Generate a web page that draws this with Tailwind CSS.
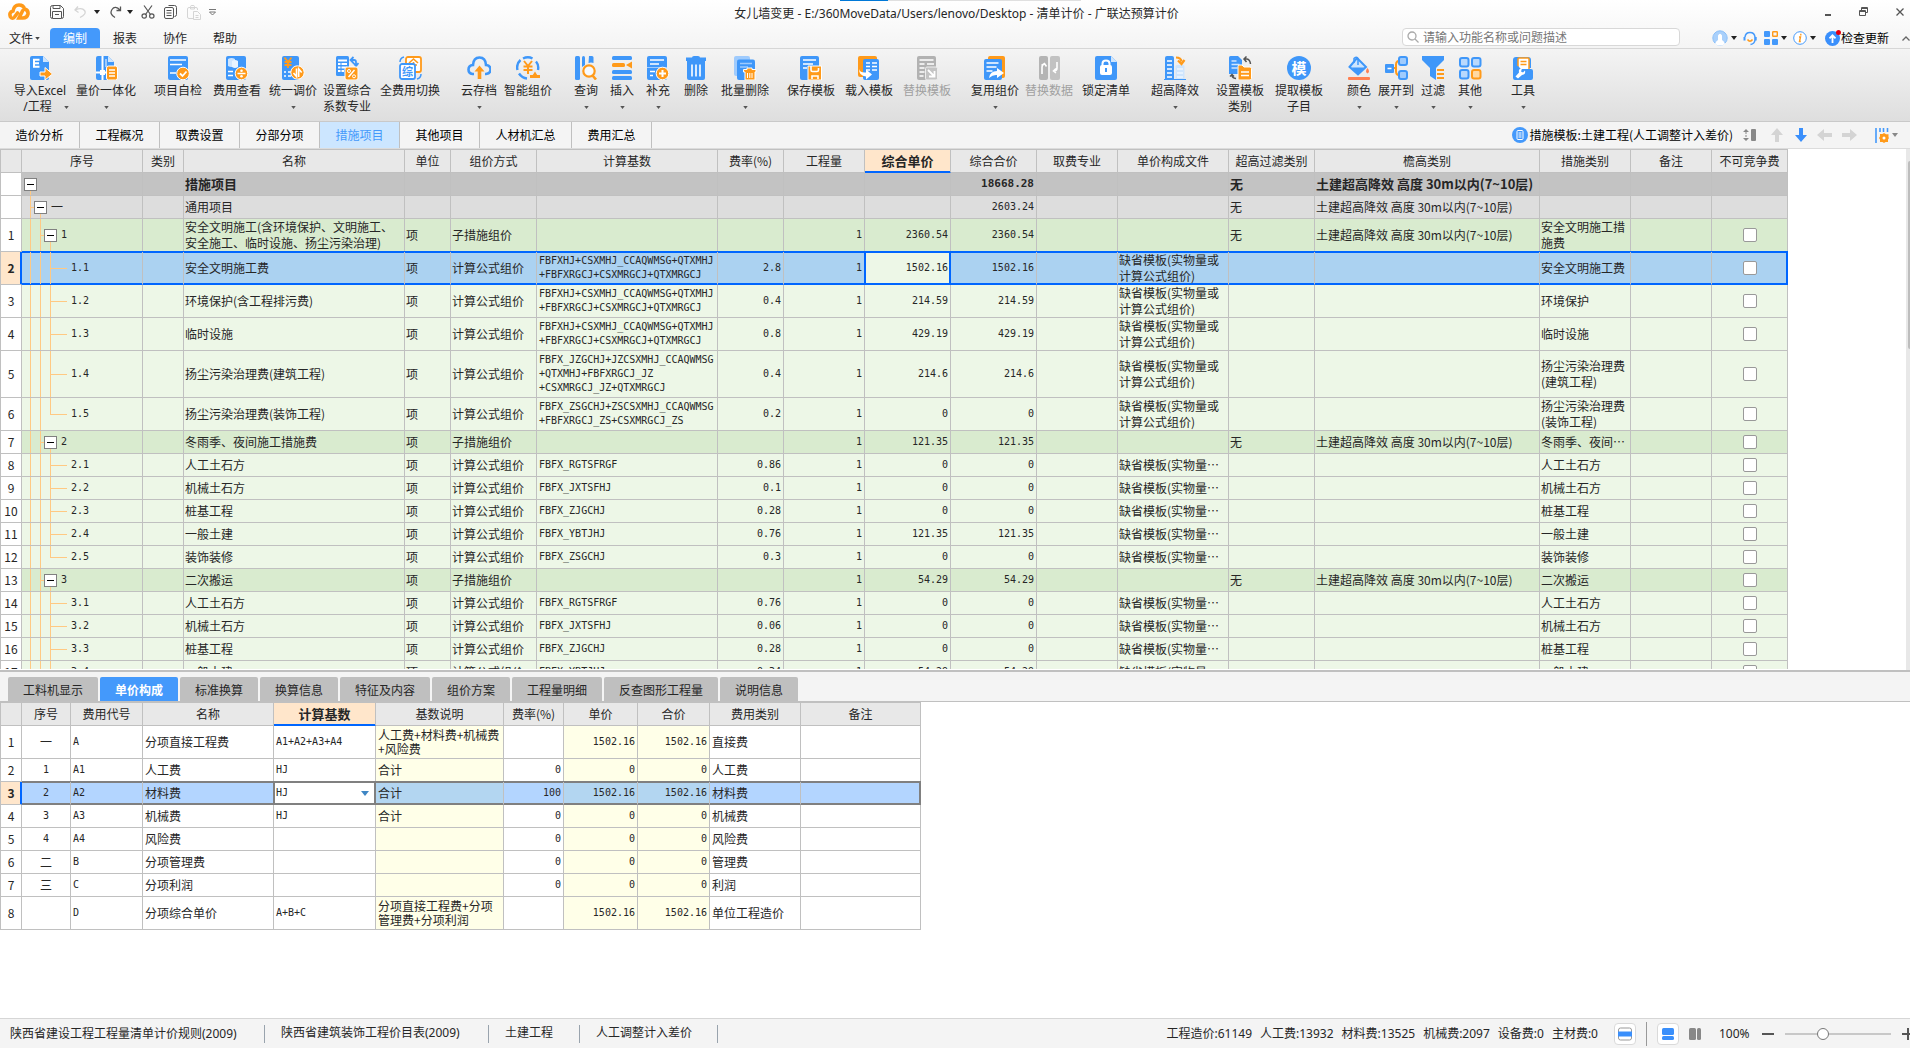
<!DOCTYPE html>
<html lang="zh-CN">
<head>
  <meta charset="UTF-8">
  <meta name="viewport" content="width=device-width, initial-scale=1.0">
  <title>女儿墙变更 - 清单计价 - 广联达预算计价</title>
  <script src="https://cdn.jsdelivr.net/npm/@tailwindcss/browser@4"></script>
</head>
<body class="h-screen overflow-hidden flex flex-col bg-white text-xs text-[#262626] font-['Noto_Sans_CJK_SC',sans-serif]">

  <!-- Title bar + menu -->
  <header class="shrink-0 bg-linear-to-b from-white to-[#f4f4f4] border-b border-[#d6d6d6]">
    <div class="absolute top-0 left-[44%] w-[241px] h-px bg-[#e0e0e0]"><div class="w-12 h-px bg-[#0078d7]"></div></div>
    <div class="h-7 flex items-center">
      <div class="flex-1 flex items-center pl-2 pb-1">
        <svg class="w-[22px] h-[18px]" viewBox="0 0 22 18" fill="none" stroke="#ff9a1a" stroke-width="3.600" stroke-linecap="round"><path d="M9.500 10L6.500 14Q4.500 16.500 2.500 14Q.5 9.500 5 8Q6 2 11 2Q15.500 2 16.500 6Q20.500 7 20 11Q19 15 15 15H11L14.500 8"/></svg>
        <div class="flex items-center ml-5 text-[#555]">
          <button aria-label="保存"><svg class="w-[14px] h-[14px]" viewBox="0 0 14 14" fill="none" stroke="#555"><path d="M.5 2.500q0-2 2-2h8l3 3v8q0 2-2 2h-9q-2 0-2-2zM3 .5v3h7v-3M2.500 13V6.500h9V13M5 9.500h4"/></svg></button>
          <button class="ml-[10px]" aria-label="撤销"><svg class="w-3 h-[14px]" viewBox="0 0 12 14" fill="none" stroke="#d5d5d5" stroke-width="1.300"><path d="M4 1.500L1 5l3.500 2.500M1.200 5Q8 2 10.500 5.500T6 12.500"/></svg></button>
          <button class="ml-2" aria-label="撤销列表"><svg class="w-[6px] h-1" viewBox="0 0 6 4"><path d="M0 0h6L3 4z" fill="#222"/></svg></button>
          <button class="ml-[10px]" aria-label="恢复"><svg class="w-3 h-[14px]" viewBox="0 0 12 14" fill="none" stroke="#555" stroke-width="1.300"><path d="M10.500 1.500v4H6.500M10.300 5.300Q5 0 2 4.500T5 12.500"/></svg></button>
          <button class="ml-[5px]" aria-label="恢复列表"><svg class="w-[6px] h-1" viewBox="0 0 6 4"><path d="M0 0h6L3 4z" fill="#222"/></svg></button>
          <button class="ml-2" aria-label="剪切"><svg class="w-[14px] h-[14px]" viewBox="0 0 14 14" fill="none" stroke="#555" stroke-width="1.200"><path d="M3 .5l6.500 9M11 .5l-6.500 9"/><circle cx="3.200" cy="11" r="2.200"/><circle cx="10.800" cy="11" r="2.200"/></svg></button>
          <button class="ml-[9px]" aria-label="复制"><svg class="w-[13px] h-[14px]" viewBox="0 0 13 14" fill="none" stroke="#555"><path d="M4.500.5h6q2 0 2 2v7q0 2-2 2M.5 4q0-1.500 1.500-1.500h6q1.500 0 1.500 1.500v8q0 1.500-1.500 1.500H2Q.5 13.500.5 12zM2.500 5.500h5M2.500 8h5M2.500 10.500h5"/></svg></button>
          <button class="ml-[10px]" aria-label="粘贴"><svg class="w-[14px] h-[15px]" viewBox="0 0 14 15" fill="none" stroke="#d5d5d5"><path d="M6 13.500H2Q.5 13.500.5 12V4Q.5 2.500 2 2.500h7q1.500 0 1.500 1.500v1M3.500 4V1.500Q3.500.5 5 .5h1q1.500 0 1.500 1V4zM6.500 6.500h4l3 3v5h-7zM8.500 10.500h3M8.500 12.500h3"/></svg></button>
          <button class="ml-2" aria-label="自定义"><svg class="w-[7px] h-[7px]" viewBox="0 0 7 7" fill="none" stroke="#777"><path d="M0 .5h7M.5 3l3 3 3-3z"/></svg></button>
        </div>
      </div>
      <h1 class="font-['Noto_Sans','Noto_Sans_CJK_SC',sans-serif]">女儿墙变更 - E:/360MoveData/Users/lenovo/Desktop - 清单计价 - 广联达预算计价</h1>
      <div class="flex-1 flex items-center justify-end gap-[26px] pr-[5px] pb-1">
        <button aria-label="最小化"><svg class="w-[10px] h-[10px]" viewBox="0 0 10 10"><path d="M2 7h6v2H2z" fill="#555"/></svg></button>
        <button aria-label="还原"><svg class="w-[10px] h-[10px]" viewBox="0 0 10 10" fill="none" stroke="#555"><path d="M.5 3.500h6v5h-6zM.5 4.500h6M2.500 3V.5h6v5H7M2.500 1.500h6"/></svg></button>
        <button aria-label="关闭"><svg class="w-[10px] h-[10px]" viewBox="0 0 10 10" stroke="#555" stroke-width="1.300"><path d="M1.500 1.500l7 7M8.500 1.500l-7 7"/></svg></button>
      </div>
    </div>
    <div class="h-5 flex items-center">
      <nav class="flex h-full">
        <a href="#" class="w-[50px] h-full pl-[9px] flex items-center gap-[2px]">文件<svg class="w-[5px] h-[3px]" viewBox="0 0 6 4"><path d="M0 0h6L3 4z" fill="#444"/></svg></a>
        <a href="#" class="w-[50px] h-full flex items-center justify-center rounded-t-sm bg-[#4499fb] text-white">编制</a>
        <a href="#" class="w-[50px] h-full flex items-center justify-center">报表</a>
        <a href="#" class="w-[50px] h-full flex items-center justify-center">协作</a>
        <a href="#" class="w-[50px] h-full flex items-center justify-center">帮助</a>
      </nav>
      <div class="ml-auto flex items-center">
        <label class="w-[278px] h-[18px] pl-1 mb-[2px] flex items-center gap-1 bg-white border border-[#d8d8d8] rounded-sm">
          <svg class="w-3 h-3" viewBox="0 0 12 12" fill="none" stroke="#aaa" stroke-width="1.300"><circle cx="5" cy="5" r="4"/><path d="M8 8l3.500 3.500"/></svg>
          <input type="text" placeholder="请输入功能名称或问题描述" aria-label="搜索" class="flex-1 h-4 outline-none placeholder:text-[#777]">
        </label>
        <button class="ml-8 flex items-center gap-[3px]" aria-label="用户"><svg class="w-4 h-4" viewBox="0 0 16 16"><circle cx="8" cy="8" r="7.200" fill="#a9d0fb" stroke="#8cc0f8"/><path d="M3 14Q4 11 6 10V5.500Q8 2 10 5.500V10Q12 11 13 14Q8 17 3 14z" fill="#fff"/></svg><svg class="w-[6px] h-1" viewBox="0 0 6 4"><path d="M0 0h6L3 4z" fill="#222"/></svg></button>
        <button class="ml-[6px]" aria-label="客服"><svg class="w-[14px] h-[15px]" viewBox="0 0 14 15" fill="none" stroke="#4499fb" stroke-width="1.500"><path d="M2 6Q2.500 1.500 7 1.500T12 6v3Q11.500 13 7.500 13.500"/><path d="M1.500 6v3.500M12.700 6v3.500" stroke-width="2"/><path d="M4.500 8.500Q7 12 9.500 8.500" stroke="#ff9a1a"/></svg></button>
        <button class="ml-[7px] flex items-center gap-[3px]" aria-label="应用"><svg class="w-[14px] h-[14px]" viewBox="0 0 14 14" fill="#4499fb"><rect width="6" height="6" rx="1"/><rect x="8.700" y=".7" width="4.600" height="4.600" rx=".5" fill="none" stroke="#ff9a1a" stroke-width="1.400"/><rect y="8" width="6" height="6" rx="1"/><rect x="8" y="8" width="6" height="6" rx="1"/></svg><svg class="w-[6px] h-1" viewBox="0 0 6 4"><path d="M0 0h6L3 4z" fill="#222"/></svg></button>
        <button class="ml-[6px] flex items-center gap-[3px]" aria-label="信息"><svg class="w-[14px] h-[14px]" viewBox="0 0 14 14"><circle cx="7" cy="7" r="6.300" fill="#fff" stroke="#4499fb"/><path d="M7.800 2.800v1.600M6 6h1.500L6.500 10.500h1.300" stroke="#ff9a1a" stroke-width="1.400" fill="none"/></svg><svg class="w-[6px] h-1" viewBox="0 0 6 4"><path d="M0 0h6L3 4z" fill="#222"/></svg></button>
        <button class="ml-[9px] flex items-center text-black"><svg class="w-4 h-4" viewBox="0 0 16 16"><circle cx="7.500" cy="8.500" r="7.500" fill="#3a8ffb"/><path d="M7.500 13V5.500M4.500 8.300l3-3 3 3" stroke="#fff" stroke-width="1.800" fill="none"/><circle cx="13.500" cy="2.500" r="2.500" fill="#e60012"/></svg>检查更新</button>
        <button class="ml-[13px]" aria-label="收起"><svg class="w-2 h-[5px]" viewBox="0 0 8 5" fill="none" stroke="#666" stroke-width="1.300"><path d="M.5 4.500L4 1l3.500 3.500"/></svg></button>
      </div>
    </div>
  </header>

  <!-- Ribbon -->
  <div id="ribbon" class="shrink-0 h-[73px] flex items-start pl-2 pt-[7px] bg-linear-to-b from-[#f4f4f4] to-[#dedede] border-b border-[#c9c9c9] font-['Noto_Sans','Noto_Sans_CJK_SC',sans-serif]"></div>

  <!-- Project tabs -->
  <div class="shrink-0 h-[27px] flex items-center bg-[#f4f4f4] border-b border-[#dcdcdc] text-black">
    <nav id="page-tabs" class="flex h-full"></nav>
    <div class="ml-auto flex items-center">
      <svg class="w-4 h-4" viewBox="0 0 16 16"><circle cx="8" cy="8" r="8" fill="#4499fb"/><rect x="5" y="3.500" width="6" height="9" rx="1" fill="none" stroke="#fff"/><path d="M6.500 6h3M6.500 8h3M6.500 10h3" stroke="#fff"/></svg>
      <span class="ml-[2px]">措施模板:土建工程(人工调整计入差价)</span>
      <button class="ml-[10px]" aria-label="行高"><svg class="w-[14px] h-3" viewBox="0 0 14 12"><path d="M3 0l3 3H0zM3 12l3-3H0z" fill="#888"/><path d="M3 3v6" stroke="#888" stroke-dasharray="2 1"/><rect x="8" width="5" height="12" rx="1" fill="#888"/></svg></button>
      <button class="ml-[14px]" aria-label="上移"><svg class="w-3 h-[14px]" viewBox="0 0 12 14"><path d="M6 0l6 7H8v7H4V7H0z" fill="#d4d4d4"/></svg></button>
      <button class="ml-3" aria-label="下移"><svg class="w-3 h-[14px]" viewBox="0 0 12 14"><path d="M6 14l6-7H8V0H4v7H0z" fill="#3a8ffb"/></svg></button>
      <button class="ml-[10px]" aria-label="左移"><svg class="w-[15px] h-3" viewBox="0 0 15 12"><path d="M0 6l7-6v4h8v4H7v4z" fill="#d4d4d4"/></svg></button>
      <button class="ml-[10px]" aria-label="右移"><svg class="w-[15px] h-3" viewBox="0 0 15 12"><path d="M15 6L8 0v4H0v4h8v4z" fill="#d4d4d4"/></svg></button>
      <button class="ml-[18px] mr-3 flex items-center gap-[3px]" aria-label="列设置"><svg class="w-[14px] h-[15px]" viewBox="0 0 14 15"><path d="M1 0v15M5 0v4M8.500 0v4M12.500 0v4" stroke="#4499fb" stroke-width="1.600"/><path d="M9 5l2 1.200h2.500v3L14 10l-1 1.500V14h-2.500L9 15l-1.500-1H5v-2.500L4 10l1-1.500V6h2.500z" fill="#ff9a1a"/><circle cx="9" cy="10" r="1.500" fill="#fff"/></svg><svg class="w-[6px] h-1" viewBox="0 0 6 4"><path d="M0 0h6L3 4z" fill="#888"/></svg></button>
    </div>
  </div>

  <!-- Measures table -->
  <main class="flex-[521] min-h-0 flex overflow-hidden">
    <div class="flex-1 min-w-0 overflow-hidden mb-px">
      <table id="measures" class="table-fixed w-[1788px] border-separate border-spacing-0 leading-[14px]"></table>
    </div>
    <div class="w-1 bg-[#e8e8e8] pt-3"><div class="ml-[2px] h-[188px] rounded-l-sm bg-[#bdbdbd]"></div></div>
  </main>

  <!-- Price breakdown -->
  <section class="flex-[346] min-h-0 border-t-2 border-[#c0c0c0] overflow-hidden">
    <div id="detail-tabs" class="h-[30px] pl-2 flex items-end gap-[2px] bg-[#f4f4f4] border-b border-[#c0c0c0]"></div>
    <table id="detail" class="table-fixed w-[921px] border-separate border-spacing-0 leading-[14px]"></table>
  </section>

  <footer class="shrink-0 h-[30px] pt-px flex items-center bg-[#f4f4f4] border-t border-[#d6d6d6] font-['Noto_Sans','Noto_Sans_CJK_SC',sans-serif]">
    <span class="pl-[10px] w-[264px]">陕西省建设工程工程量清单计价规则(2009)</span>
    <span class="pl-4 w-[224px] h-[18px] border-l border-[#99a3ad]">陕西省建筑装饰工程价目表(2009)</span>
    <span class="pl-4 w-[91px] h-[18px] border-l border-[#99a3ad]">土建工程</span>
    <span class="pl-4 w-[139px] h-[18px] border-x border-[#99a3ad]">人工调整计入差价</span>
    <div class="ml-auto flex items-center">
      <div class="flex gap-2"><span>工程造价:61149</span><span>人工费:13932</span><span>材料费:13525</span><span>机械费:2097</span><span>设备费:0</span><span>主材费:0</span></div>
      <button class="ml-4 w-[22px] h-[22px] flex items-center justify-center bg-white border border-[#dadada] rounded-sm" aria-label="单窗口"><svg class="w-[14px] h-[14px]" viewBox="0 0 14 14"><rect x=".5" y="1" width="13" height="12" rx="2" fill="#fff" stroke="#999"/><path d="M0 4.500h14v5H0z" fill="#3a8ffb"/></svg></button>
      <div class="mx-[10px] w-px h-6 bg-[#999]"></div>
      <button class="w-[22px] h-[22px] flex items-center justify-center bg-white border border-[#dadada] rounded-sm" aria-label="上下布局"><svg class="w-3 h-3" viewBox="0 0 12 12" fill="#3a8ffb"><rect width="12" height="7" rx="1.500"/><rect y="8" width="12" height="4" rx="1.500"/></svg></button>
      <button class="ml-[10px]" aria-label="左右布局"><svg class="w-3 h-3" viewBox="0 0 12 12" fill="#888"><rect width="7" height="12" rx="1.500"/><rect x="8" width="4" height="12" rx="1.500"/></svg></button>
      <span class="ml-[18px] w-8">100%</span>
      <button class="ml-[11px] w-3 h-[2px] bg-[#555]" aria-label="缩小"></button>
      <input type="range" value="34" aria-label="缩放" class="ml-[11px] w-[106px] h-[2px] appearance-none bg-[#c8c8c8] [&::-webkit-slider-thumb]:appearance-none [&::-webkit-slider-thumb]:w-3 [&::-webkit-slider-thumb]:h-3 [&::-webkit-slider-thumb]:rounded-full [&::-webkit-slider-thumb]:bg-white [&::-webkit-slider-thumb]:border [&::-webkit-slider-thumb]:border-[#777]">
      <button class="ml-[11px] w-2 h-3 overflow-hidden" aria-label="放大"><svg class="w-3 h-3 max-w-none" viewBox="0 0 12 12"><path d="M0 6h12M6 0v12" stroke="#555" stroke-width="2"/></svg></button>
    </div>
  </footer>

  <script>
    const B = '#3f97f9', O = '#ff9a1a';

    // toolbar glyphs, all on a 24x24 grid
    const icons = {
      excel: `<path d="M2 2q0-2 2-2h11l6 6v16q0 2-2 2H4q-2 0-2-2z" fill="${B}"/><path d="M15 0v6h6z" fill="#cfe5fd"/><path d="M11.500 3.700H6v7h5.500M6 7.200h5" stroke="#fff" stroke-width="2" fill="none"/><path d="M12 16h5v-4.500l7.500 6.500-7.500 6v-4h-5z" fill="${O}" stroke="#fff"/>`,
      price: `<path d="M2 2q0-2 2-2h10l6 6v16q0 2-2 2H4q-2 0-2-2z" fill="${B}"/><path d="M14 0v6h6z" fill="#cfe5fd"/><path d="M8.500 0v24M2 16.500h12" stroke="#fff" stroke-width="2"/><rect x="6" y="14" width="5" height="5" fill="#fff"/><path d="M12 3v8" stroke="#fff"/><rect x="12.500" y="10" width="11" height="14" rx="2" fill="${O}" stroke="#fff"/><path d="M15 14h6M15 17h6M15 20h6" stroke="#fff" stroke-width="1.500"/>`,
      check: `<rect x="2" width="20" height="24" rx="2" fill="${B}"/><path d="M4 4h16M4 8.500h12" stroke="#fff" stroke-width="1.500"/><path d="M4 17h6" stroke="#fff" stroke-width="1.500"/><circle cx="17" cy="17.500" r="6.300" fill="${O}" stroke="#fff"/><path d="M14 17.500l2.500 2.500 4-4.500" stroke="#fff" stroke-width="1.800" fill="none"/>`,
      view: `<rect x="1" width="20" height="24" rx="2" fill="${B}"/><path d="M3 3q3.500-2 7 0v7q-3.500 2-7 0z" fill="#cfe5fd"/><path d="M7 5q3-2 6 0v6q-3 2-6 0z" fill="#e8f3ff"/><path d="M3 15.500h5M3 19.500h5" stroke="#fff" stroke-width="1.500"/><circle cx="16.500" cy="17.500" r="6.300" fill="${O}" stroke="#fff"/><path d="M12.500 17.500h8" stroke="#fff" stroke-width="1.500"/><circle cx="16.500" cy="14.700" r="1.300" fill="#fff"/><circle cx="16.500" cy="20.300" r="1.300" fill="#fff"/>`,
      adjust: `<rect x="1" width="17" height="24" rx="2" fill="${B}"/><path d="M3.500 1.500L7 6l3.500-4.500M7 6v6M3.500 6h7M3.500 9h7" stroke="${O}" stroke-width="1.800" fill="none"/><path d="M3 16h2M7 16h3M3 20h2M7 20h3" stroke="#fff" stroke-width="1.500"/><circle cx="16.500" cy="16.500" r="6.700" fill="${O}" stroke="#fff"/><path d="M15.500 12.500v8l-3-3.500M17.700 21v-8l3 3.500" stroke="#fff" stroke-width="1.600" fill="none"/>`,
      factor: `<rect x="1" width="13" height="20" rx="1.500" fill="${B}"/><path d="M3 4.500h9M3 8h9M3 11.500h9M3 15h6" stroke="#fff" stroke-width="1.800"/><path d="M6 6v12" stroke="${B}"/><path d="M16 4h3q2 0 2 2v3M18.500 1L15.500 4l3 3M18.500 7l2.500 3 2.500-3" stroke="${B}" stroke-width="1.800" fill="none"/><rect x="10" y="11" width="13" height="13" rx="2" fill="${O}" stroke="#fff"/><path d="M19.500 14l-6 7" stroke="#fff" stroke-width="1.500"/><circle cx="14" cy="15" r="1.500" fill="none" stroke="#fff"/><circle cx="19" cy="20.300" r="1.500" fill="none" stroke="#fff"/>`,
      swap: `<rect x="8" y="1" width="15" height="15" rx="2" fill="#fff" stroke="${O}" stroke-width="1.800"/><path d="M11 7l4.500-4L20 7M12 9h7M15.500 6v7" stroke="${O}" stroke-width="1.600" fill="none"/><rect x="2" y="8" width="15" height="15" rx="2" fill="#fff" stroke="${B}" stroke-width="1.800"/><text x="9.500" y="20" text-anchor="middle" font-size="11" font-weight="700" fill="${B}">综</text><path d="M2 6q0-4 4-5M23 18q0 4-4 5" stroke="${B}" stroke-width="1.500" fill="none"/>`,
      cloud: `<path d="M7 18H5.500q-4-.5-4-4.500t4.500-4.500q.5-7.500 6.500-7.500T19 9q4.500.5 4.500 4.500T19 18h-1" stroke="${B}" stroke-width="2.600" fill="none"/><path d="M12.500 9.500l5 6h-3.200V23h-3.600v-7.500H7.500z" fill="${O}"/>`,
      smart: `<path d="M7 2.500Q12 0 16.500 2.500M4.500 4Q0 8 1.500 14M3 17.500Q6 22 11 22.500M20 5.500Q23 9 22 14" stroke="${B}" stroke-width="2.400" fill="none"/><path d="M8 5l4 5 4-5M12 10v8M7.500 10.500h9M7.500 14h9" stroke="${O}" stroke-width="2" fill="none"/><path d="M19 15.500l2.200 3.500H24v3H14v-3h2.800z" fill="${O}"/>`,
      query: `<rect x="1" width="5" height="24" rx="1.500" fill="${B}"/><path d="M8 1.500Q8 0 9.500 0T11 1.500V9L8 11z" fill="${B}"/><path d="M15 0h3q1.500 0 1.500 1.500V7q-2.500-1-5 0z" fill="${B}"/><circle cx="15" cy="15" r="5.700" fill="#f6faff" stroke="${O}" stroke-width="2.200"/><path d="M18.500 19.500l3.500 4" stroke="${O}" stroke-width="2.600"/>`,
      insert: `<rect x="2" width="20" height="4" rx="1.500" fill="${B}"/><rect x="2" y="14" width="20" height="4" rx="1.500" fill="${B}"/><rect x="2" y="20" width="20" height="4" rx="1.500" fill="${B}"/><rect x="2" y="7" width="13" height="4" rx="1.500" fill="${O}"/><path d="M22 5.500v7L16 9z" fill="${O}"/>`,
      add: `<rect x="1" width="20" height="24" rx="2" fill="${B}"/><path d="M4 4h14M4 8h9M4 15.500h5M4 19.500h3" stroke="#fff" stroke-width="1.500"/><path d="M1 11.500h20" stroke="#9fcbfd"/><circle cx="16.500" cy="17.500" r="6.300" fill="${O}" stroke="#fff"/><path d="M16.500 14v7M13 17.500h7" stroke="#fff" stroke-width="2"/>`,
      trash: `<path d="M2 1.500h6Q8 0 10 0h4q2 0 2 1.500h6V5H2z" fill="${B}"/><path d="M3 4h18v18q0 2-2 2H5q-2 0-2-2z" fill="${B}"/><path d="M8 8.500v12M12 8.500v12M16 8.500v12" stroke="#fff" stroke-width="1.600"/>`,
      batch: `<rect x="1" width="16" height="20" rx="2" fill="#9fcbfd"/><rect x="4" y="3.500" width="18" height="20.500" rx="2" fill="${B}"/><path d="M7 7.500h12M7 11h8" stroke="#9fcbfd" stroke-width="1.500"/><path d="M10.500 13.500h3.500v-1.500h5v1.500h4V16h-1v8h-10v-8h-1.500z" fill="${O}" stroke="#fff"/><path d="M14.500 17v5M16.800 17v5M19 17v5" stroke="#fff"/>`,
      save: `<rect x="1" width="19" height="24" rx="2" fill="${B}"/><path d="M4 4h13M4 8h10M4 12h4" stroke="#fff" stroke-width="1.600"/><path d="M9 10h13.500v14H9z" fill="${O}" stroke="#fff"/><path d="M12 10v4q0 1.500 1.500 1.500H18q1.500 0 1.500-1.500V12M13 23v-3h6v3" stroke="#fff" stroke-width="1.600" fill="none"/>`,
      load: `<rect x="1" width="19" height="21" rx="2" fill="${O}"/><rect x="6" y="3" width="16" height="21" rx="2" fill="${B}"/><path d="M9 7h4M15 7h5M9 10.500h4M15 10.500h5M9 14h4M15 14h5" stroke="#fff" stroke-width="1.600"/><path d="M2 13q1 4 7 3.500v-3l6 5-6 5v-3Q2 20 2 13z" fill="#fff"/>`,
      replace: `<rect x="2" width="19" height="24" rx="2" fill="#b2b2b2"/><path d="M4.500 4h14M4.500 8h5M12 8h7M4.500 12h5M4.500 16h5M4.500 20h4" stroke="#fff" stroke-width="1.600"/><rect x="10.500" y="11" width="12" height="13" rx="1.500" fill="#c4c4c4" stroke="#eee"/><path d="M13 14l6 6M19.500 15v5.500H14" stroke="#fff" stroke-width="1.800" fill="none"/>`,
      reuse: `<rect x="5" width="17" height="22" rx="2" fill="${O}"/><rect x="1" y="3" width="18" height="21" rx="2" fill="${B}"/><path d="M3.500 7h12M3.500 11h10M3.500 15h6" stroke="#fff" stroke-width="1.600"/><path d="M6 22q1-7 8-7v-3l7 5-7 5v-3q-4-.5-8 3z" fill="#fff"/>`,
      data: `<rect x="2" width="9" height="24" rx="2" fill="#b4b4b4"/><rect x="13" width="10" height="24" rx="2" fill="#c2c2c2"/><path d="M5 18V11q0-2 2-3M4.500 9.500l3-2 2 3M20 6v6q0 3-3 3M19 12.500L16.500 15l2.500 2" stroke="#fff" stroke-width="1.600" fill="none"/>`,
      lock: `<path d="M1 2q0-2 2-2h14l6 6v16q0 2-2 2H3q-2 0-2-2z" fill="${B}"/><path d="M17 0v6h6z" fill="#cfe5fd"/><rect x="6" y="9" width="12" height="10" rx="2" fill="#fff"/><path d="M8.500 10V7.500q0-3 3.500-3t3.500 3V10" stroke="#fff" stroke-width="2" fill="none"/><path d="M12 12v4" stroke="${B}" stroke-width="2"/>`,
      height: `<path d="M2 2q0-2 2-2h5q2 0 2 2v22H2z" fill="${B}"/><path d="M4 5h5M4 9h5M4 13h5M4 17h5M4 21h5" stroke="#fff" stroke-width="1.500"/><rect x="12.500" y="9" width="9" height="15" rx="1.500" fill="#cfe5fd"/><path d="M14 13h6M14 17h6M14 21h6" stroke="#fff"/><path d="M13 1.500q5 0 5.500 4M15 4.500l3.500 3.500 3-4" stroke="${O}" stroke-width="2.200" fill="none"/><path d="M1 23.500h22" stroke="${B}"/>`,
      tpltype: `<path d="M1 1.500Q1 0 2.500 0H10l4 4v14H1z" fill="${B}"/><path d="M3.500 5h5M3.500 8.500h8M3.500 12h6" stroke="#cfe5fd" stroke-width="1.500"/><path d="M10 10.500Q10 9 11.500 9H14l2 2h6q1.500 0 1.500 1.500v10q0 1.500-1.500 1.500H10z" fill="${O}" stroke="#fff"/><path d="M13 16h8M13 19.500h8" stroke="#fff" stroke-width="1.500"/><path d="M16 3h3q3 .5 3.500 5M18.500.5L16 3l2.500 3M4 19q0 3 4 3.500M2 20.500l2-2 2 2" stroke="#555" stroke-width="1.500" fill="none"/>`,
      extract: `<circle cx="12" cy="12" r="12" fill="${B}"/><text x="12" y="17.500" text-anchor="middle" font-size="15" font-weight="700" fill="#fff">模</text>`,
      color: `<path d="M10 2l9 9-8 7.500L2.500 11z" fill="#cfe5fd" stroke="${B}" stroke-width="2"/><path d="M4 11.500h14l-7 6.500z" fill="${B}"/><path d="M7 7V2.500q2-2.500 4 0V9" stroke="${B}" stroke-width="1.500" fill="none"/><path d="M20.500 12q3 4 0 5.500-3-1.500 0-5.500z" fill="#ff7f50"/><rect x="1" y="21" width="22" height="3" rx="1" fill="#ff7f50"/>`,
      expand: `<path d="M8 12h4M17 4.500q-5 0-5 4v7q0 4 5 4" stroke="${O}" stroke-width="2" fill="none"/><rect x="1" y="8" width="9" height="9" rx="1" fill="${B}"/><path d="M3.500 12.500h4" stroke="#fff" stroke-width="1.500"/><rect x="15" y="1" width="8" height="8" rx="2" fill="#9fcbfd" stroke="${B}" stroke-width="2"/><rect x="15" y="15" width="8" height="8" rx="2" fill="#9fcbfd" stroke="${B}" stroke-width="2"/>`,
      filter: `<path d="M1 0h22v4l-8 8v12l-6-4v-8L1 4z" fill="${B}"/><path d="M16 14h7M16 18h7M16 22h7" stroke="${O}" stroke-width="2"/>`,
      other: `<rect x="2" y="2" width="8.500" height="8.500" rx="2" fill="#b9d9fd" stroke="${B}" stroke-width="2"/><rect x="14" y="2" width="8.500" height="8.500" rx="2" fill="#b9d9fd" stroke="${B}" stroke-width="2"/><rect x="2" y="14" width="8.500" height="8.500" rx="2" fill="#b9d9fd" stroke="${B}" stroke-width="2"/><rect x="14" y="14" width="8.500" height="8.500" rx="2" fill="#ffd9a3" stroke="${O}" stroke-width="2"/>`,
      tools: `<path d="M2 4q0-3 3-3h12q3 0 3 3v8H2z" fill="${B}"/><rect x="7" y="2" width="11" height="12" rx="1" fill="#fff" stroke="${O}" stroke-width="1.500"/><path d="M9.500 5.500h6M9.500 8.500h6" stroke="${O}" stroke-width="1.500"/><path d="M2 10h5l3 3h10q2 0 2 2v7q0 2-2 2H4q-2 0-2-2z" fill="${B}"/><path d="M4.500 20.500l3.500-4q-1-4 3-4l-1 3 2 1 2-2q1 4-3 4.500L7 22.500z" fill="#fff"/>`
    };

    // [icon, label, second line, arrow, width/margin classes]
    const ribbon = [
      ['excel', '导入Excel', '/工程', 1, 'w-16'], ['price', '量价一体化', '', 1, 'w-[68px]'],
      ['check', '项目自检', '', 0, 'w-[60px] ml-2'], ['view', '费用查看', '', 0, 'w-[58px]'], ['adjust', '统一调价', '', 1, 'w-[54px]'], ['factor', '设置综合', '系数专业', 0, 'w-[54px]'], ['swap', '全费用切换', '', 0, 'w-[72px]'],
      ['cloud', '云存档', '', 1, 'w-[50px] ml-2'], ['smart', '智能组价', '', 0, 'w-12'],
      ['query', '查询', '', 1, 'w-9 ml-4'], ['insert', '插入', '', 1, 'w-9'], ['add', '补充', '', 1, 'w-9'], ['trash', '删除', '', 0, 'w-10'], ['batch', '批量删除', '', 1, 'w-[58px]'],
      ['save', '保存模板', '', 0, 'w-[58px] ml-2'], ['load', '载入模板', '', 0, 'w-[58px]'], ['replace', '替换模板', '', 0, 'w-[58px] text-[#a0a0a0]'],
      ['reuse', '复用组价', '', 1, 'w-[54px] ml-3'], ['data', '替换数据', '', 0, 'w-[54px] text-[#a0a0a0]'], ['lock', '锁定清单', '', 0, 'w-[60px]'],
      ['height', '超高降效', '', 1, 'w-[54px] ml-3'], ['tpltype', '设置模板', '类别', 0, 'w-[60px] ml-2'], ['extract', '提取模板', '子目', 0, 'w-[58px]'],
      ['color', '颜色', '', 1, 'w-[38px] ml-3'], ['expand', '展开到', '', 1, 'w-9'], ['filter', '过滤', '', 1, 'w-[38px]'], ['other', '其他', '', 1, 'w-9'],
      ['tools', '工具', '', 1, 'w-[38px] ml-4']
    ];
    document.getElementById('ribbon').innerHTML = ribbon.map(([icon, label, sub, arrow, cls]) => `
      <button class="shrink-0 flex flex-col items-center whitespace-nowrap ${cls}">
        <svg class="w-6 h-6" viewBox="0 0 24 24">${icons[icon]}</svg>
        <span class="leading-[17px] mt-[2px]">${label}</span>
        <span class="h-4 leading-4 flex items-center gap-3 ${sub && arrow ? 'pl-3' : ''}">${sub ? `<span>${sub}</span>` : ''}${arrow ? '<svg class="w-[5px] h-[3px]" viewBox="0 0 6 4"><path d="M0 0h6L3 4z" fill="#555"/></svg>' : ''}</span>
      </button>`).join('');

    const tabs = ['造价分析', '工程概况', '取费设置', '分部分项', '措施项目', '其他项目', '人材机汇总', '费用汇总'];
    document.getElementById('page-tabs').innerHTML = tabs.map((t, i) =>
      `<a href="#" class="${t.length > 4 ? 'w-[92px]' : 'w-20'} h-full flex items-center justify-center border-r border-[#c0c0c0] ${i === 4 ? 'bg-[#cce6ff] text-[#4499fb]' : ''}">${t}</a>`).join('');

    const dtabs = [['工料机显示', 'w-[90px]'], ['单价构成', 'w-[78px]'], ['标准换算', 'w-[78px]'], ['换算信息', 'w-[78px]'], ['特征及内容', 'w-[90px]'], ['组价方案', 'w-[78px]'], ['工程量明细', 'w-[90px]'], ['反查图形工程量', 'w-[114px]'], ['说明信息', 'w-[78px]']];
    document.getElementById('detail-tabs').innerHTML = dtabs.map(([t, w], i) =>
      `<button class="h-6 pt-px rounded-t-xs ${w} ${i === 1 ? 'bg-[#4499fb] text-white font-bold' : 'bg-[#bfbfbf]'}">${t}</button>`).join('');

    const TH = 'h-6 p-0 border-r border-b border-[#c0c0c0] bg-[#e8e8e8] font-normal text-center whitespace-nowrap';
    const TH_ON = 'h-6 p-0 border-r border-b border-r-[#c0c0c0] border-b-[#0066ff] shadow-[inset_0_-1px_#0066ff] bg-[#ffe6cb] font-bold text-[13px] text-center whitespace-nowrap';
    const MONO = "font-['DejaVu_Sans_Mono',monospace] text-[10px]";

    const F = '缺省模板(实物量或\n计算公式组价)', FS = '缺省模板(实物量…', E = '土建超高降效 高度 30m以内(7~10层)', G = '计算公式组价';
    // kind, height, no, seq, name, unit, method, base, rate, qty, price, total, file, over, eave, type
    const rows = [
      ['root', 1, '', '', '措施项目', '', '', '', '', '', '', '18668.28', '', '无', E, ''],
      ['part', 1, '', '一', '通用项目', '', '', '', '', '', '', '2603.24', '', '无', E, ''],
      ['group', 2, 1, '1', '安全文明施工(含环境保护、文明施工、\n安全施工、临时设施、扬尘污染治理)', '项', '子措施组价', '', '', '1', '2360.54', '2360.54', '', '无', E, '安全文明施工措\n施费'],
      ['leaf', 2, 2, '1.1', '安全文明施工费', '项', G, 'FBFXHJ+CSXMHJ_CCAQWMSG+QTXMHJ\n+FBFXRGCJ+CSXMRGCJ+QTXMRGCJ', '2.8', '1', '1502.16', '1502.16', F, '', '', '安全文明施工费'],
      ['leaf', 2, 3, '1.2', '环境保护(含工程排污费)', '项', G, 'FBFXHJ+CSXMHJ_CCAQWMSG+QTXMHJ\n+FBFXRGCJ+CSXMRGCJ+QTXMRGCJ', '0.4', '1', '214.59', '214.59', F, '', '', '环境保护'],
      ['leaf', 2, 4, '1.3', '临时设施', '项', G, 'FBFXHJ+CSXMHJ_CCAQWMSG+QTXMHJ\n+FBFXRGCJ+CSXMRGCJ+QTXMRGCJ', '0.8', '1', '429.19', '429.19', F, '', '', '临时设施'],
      ['leaf', 3, 5, '1.4', '扬尘污染治理费(建筑工程)', '项', G, 'FBFX_JZGCHJ+JZCSXMHJ_CCAQWMSG\n+QTXMHJ+FBFXRGCJ_JZ\n+CSXMRGCJ_JZ+QTXMRGCJ', '0.4', '1', '214.6', '214.6', F, '', '', '扬尘污染治理费\n(建筑工程)'],
      ['last', 2, 6, '1.5', '扬尘污染治理费(装饰工程)', '项', G, 'FBFX_ZSGCHJ+ZSCSXMHJ_CCAQWMSG\n+FBFXRGCJ_ZS+CSXMRGCJ_ZS', '0.2', '1', '0', '0', F, '', '', '扬尘污染治理费\n(装饰工程)'],
      ['group', 1, 7, '2', '冬雨季、夜间施工措施费', '项', '子措施组价', '', '', '1', '121.35', '121.35', '', '无', E, '冬雨季、夜间…'],
      ['leaf', 1, 8, '2.1', '人工土石方', '项', G, 'FBFX_RGTSFRGF', '0.86', '1', '0', '0', FS, '', '', '人工土石方'],
      ['leaf', 1, 9, '2.2', '机械土石方', '项', G, 'FBFX_JXTSFHJ', '0.1', '1', '0', '0', FS, '', '', '机械土石方'],
      ['leaf', 1, 10, '2.3', '桩基工程', '项', G, 'FBFX_ZJGCHJ', '0.28', '1', '0', '0', FS, '', '', '桩基工程'],
      ['leaf', 1, 11, '2.4', '一般土建', '项', G, 'FBFX_YBTJHJ', '0.76', '1', '121.35', '121.35', FS, '', '', '一般土建'],
      ['last', 1, 12, '2.5', '装饰装修', '项', G, 'FBFX_ZSGCHJ', '0.3', '1', '0', '0', FS, '', '', '装饰装修'],
      ['group', 1, 13, '3', '二次搬运', '项', '子措施组价', '', '', '1', '54.29', '54.29', '', '无', E, '二次搬运'],
      ['leaf', 1, 14, '3.1', '人工土石方', '项', G, 'FBFX_RGTSFRGF', '0.76', '1', '0', '0', FS, '', '', '人工土石方'],
      ['leaf', 1, 15, '3.2', '机械土石方', '项', G, 'FBFX_JXTSFHJ', '0.06', '1', '0', '0', FS, '', '', '机械土石方'],
      ['leaf', 1, 16, '3.3', '桩基工程', '项', G, 'FBFX_ZJGCHJ', '0.28', '1', '0', '0', FS, '', '', '桩基工程'],
      ['leaf', 1, 17, '3.4', '一般土建', '项', G, 'FBFX_YBTJHJ', '0.34', '1', '54.29', '54.29', FS, '', '', '一般土建']
    ];
    const heads = [['', 'w-[22px]'], ['序号', 'w-[121px]'], ['类别', 'w-[41px]'], ['名称', 'w-[221px]'], ['单位', 'w-[46px]'], ['组价方式', 'w-[86px]'], ['计算基数', 'w-[181px]'], ['费率(%)', 'w-[66px]'], ['工程量', 'w-[81px]'], ['综合单价', 'w-[86px]'], ['综合合价', 'w-[86px]'], ['取费专业', 'w-[81px]'], ['单价构成文件', 'w-[111px]'], ['超高过滤类别', 'w-[86px]'], ['檐高类别', 'w-[225px]'], ['措施类别', 'w-[91px]'], ['备注', 'w-[81px]'], ['不可竞争费', 'w-[76px]']];
    const bg = { root: 'bg-[#c3c3c3] font-bold', part: 'bg-[#dddddd]', group: 'bg-[#d9ebcf]', leaf: 'bg-[#edf7e7]', last: 'bg-[#edf7e7]' };
    const hs = ['', 'h-[22px]', 'h-8', 'h-[46px]'];

    // expand box with the stem that runs down to its children
    const box = `<div class="w-[13px] flex flex-col items-center"><div class="flex-1"></div><button class="w-[13px] h-[13px] bg-white border border-[#808080] flex items-center justify-center" aria-label="折叠"><span class="w-[7px] h-px bg-black"></span></button><div class="flex-1 w-px bg-[#ffc983]"></div></div>`;
    const stem = '<div class="w-[10px] border-l border-[#ffc983]"></div>';
    const tick = '<div class="w-1 border-l border-[#ffc983] flex items-center"><div class="w-full h-px bg-[#ffc983]"></div></div>';
    function tree(kind, seq) {
      const text = `<span class="${seq === '一' ? 'text-xs' : MONO} ml-1 self-center">${seq}</span>`;
      if (kind === 'root') return '<div class="w-[2px]"></div>' + box;
      if (kind === 'part') return '<div class="w-2"></div>' + tick + box + text;
      if (kind === 'group') return '<div class="w-2"></div>' + stem + tick + box + text;
      const lower = kind === 'last' ? '' : 'border-l border-[#ffc983]';
      return `<div class="w-2"></div>${stem}${stem}<div class="w-[17px] flex flex-col"><div class="flex-1 border-l border-b border-[#ffc983]"></div><div class="flex-1 ${lower}"></div></div>${text}`;
    }

    document.getElementById('measures').innerHTML =
      '<thead><tr>' + heads.map(([t, w], i) => `<th class="${w} border-t border-t-[#c0c0c0] ${i === 0 ? 'border-l' : ''} ${i === 9 ? TH_ON : TH}">${t}</th>`).join('') + '</tr></thead><tbody>' +
      rows.map(r => {
        const [kind, h, no, seq, name, unit, method, base, rate, qty, price, total, file, over, eave, type] = r;
        const on = no === 2;
        const line = on
          ? 'border-r border-b border-r-[#c0c0c0] border-b-[#0066ff] shadow-[0_-1px_#0066ff,inset_0_1px_#0066ff,inset_0_-1px_#0066ff] bg-[#abd2f1]'
          : 'border-r border-b border-[#c0c0c0] ' + bg[kind];
        const priceLine = on
          ? 'border-r border-b border-[#0066ff] shadow-[0_-1px_#0066ff,-1px_0_#0066ff,inset_1px_1px_#0066ff,inset_-1px_-1px_#0066ff] bg-[#edf7e7]'
          : line;
        const endLine = on
          ? 'border-r border-b border-[#0066ff] shadow-[0_-1px_#0066ff,inset_0_1px_#0066ff,inset_-1px_-1px_#0066ff] bg-[#abd2f1]'
          : line;
        const size = kind === 'root' ? 'text-[13px]' : 'text-xs';
        const td = v => `<td class="p-0 px-px overflow-hidden whitespace-pre ${size} ${line}">${v}</td>`;
        const num = (v, l = line) => `<td class="p-0 pr-[2px] text-right font-['DejaVu_Sans_Mono',monospace] ${l} ${kind === 'root' ? 'text-[11px]' : 'text-[10px]'}">${v}</td>`;
        const chk = kind === 'root' || kind === 'part' ? '' : '<input type="checkbox" aria-label="不可竞争费" class="block mx-auto appearance-none w-[14px] h-[14px] bg-white border border-[#999] rounded-xs">';
        return `<tr>
          <th class="p-0 border-x border-b text-center ${on ? 'bg-[#ffe6cb] font-bold border-l-[#c0c0c0] border-b-[#c0c0c0] border-r-[#0066ff] shadow-[inset_-1px_0_#0066ff]' : 'bg-white font-normal border-[#c0c0c0]'}">${no}</th>
          <td class="p-0 ${line}"><div class="flex ${hs[h]}">${tree(kind, seq)}</div></td>
          ${td('')}${td(name)}${td(unit)}${td(method)}
          <td class="p-0 px-[2px] overflow-hidden whitespace-pre font-['DejaVu_Sans_Mono',monospace] text-[10px] ${line}">${base}</td>
          ${num(rate)}${num(qty)}${num(price, priceLine)}${num(total)}
          ${td('')}${td(file)}${td(over)}${td(eave)}${td(type)}${td('')}
          <td class="p-0 ${endLine}">${chk}</td></tr>`;
      }).join('') + '</tbody>';

    const dheads = [['', 'w-[22px]'], ['序号', 'w-[49px]'], ['费用代号', 'w-[72px]'], ['名称', 'w-[131px]'], ['计算基数', 'w-[102px]'], ['基数说明', 'w-[128px]'], ['费率(%)', 'w-[60px]'], ['单价', 'w-[74px]'], ['合价', 'w-[72px]'], ['费用类别', 'w-[91px]'], ['备注', 'w-[120px]']];
    const drows = [
      ['h-[33px]', '一', 'A', '分项直接工程费', 'A1+A2+A3+A4', '人工费+材料费+机械费\n+风险费', '', '1502.16', '1502.16', '直接费'],
      ['h-[23px]', '1', 'A1', '人工费', 'HJ', '合计', '0', '0', '0', '人工费'],
      ['h-[23px]', '2', 'A2', '材料费', 'HJ', '合计', '100', '1502.16', '1502.16', '材料费'],
      ['h-[23px]', '3', 'A3', '机械费', 'HJ', '合计', '0', '0', '0', '机械费'],
      ['h-[23px]', '4', 'A4', '风险费', '', '', '0', '0', '0', '风险费'],
      ['h-[23px]', '二', 'B', '分项管理费', '', '', '0', '0', '0', '管理费'],
      ['h-[23px]', '三', 'C', '分项利润', '', '', '0', '0', '0', '利润'],
      ['h-[33px]', '', 'D', '分项综合单价', 'A+B+C', '分项直接工程费+分项\n管理费+分项利润', '', '1502.16', '1502.16', '单位工程造价']
    ];
    document.getElementById('detail').innerHTML =
      '<thead><tr>' + dheads.map(([t, w], i) => `<th class="${w} border-t border-t-[#c0c0c0] ${i === 0 ? 'border-l' : ''} ${i === 4 ? TH_ON : TH}">${t}</th>`).join('') + '</tr></thead><tbody>' +
      drows.map((r, i) => {
        const on = i === 2;
        const edge = on
          ? 'border-r border-b border-r-[#c0c0c0] border-b-[#808080] shadow-[0_-1px_#808080,inset_0_1px_#808080,inset_0_-1px_#808080]'
          : 'border-r border-b border-[#c0c0c0]';
        const w = `p-0 px-[2px] whitespace-pre ${edge} ${on ? 'bg-[#b3d5ff]' : 'bg-white'}`;
        const y = `p-0 px-[2px] whitespace-pre ${edge} ${on ? 'bg-[#b3d6f1]' : 'bg-[#ffffe8]'}`;
        const base = on
          ? `<td class="p-0 border-r border-b border-[#808080] bg-white shadow-[0_-1px_#808080,-1px_0_#808080,inset_1px_1px_#808080,inset_-1px_-1px_#808080]"><div class="flex items-center pl-[2px] pr-[6px]"><select aria-label="计算基数" class="flex-1 appearance-none outline-none ${MONO}"><option>HJ</option></select><svg class="w-2 h-[5px]" viewBox="0 0 8 5"><path d="M0 0h8L4 5z" fill="#3f86c4"/></svg></div></td>`
          : `<td class="${w} ${MONO}">${r[4]}</td>`;
        return `<tr class="${r[0]}">
          <th class="p-0 border-x border-b text-center ${on ? 'bg-[#ffe6cb] font-bold border-l-[#c0c0c0] border-b-[#c0c0c0] border-r-[#0066ff] shadow-[inset_-1px_0_#0066ff]' : 'bg-white font-normal border-[#c0c0c0]'}">${i + 1}</th>
          <td class="${w} text-center ${/\d/.test(r[1]) ? MONO : ''}">${r[1]}</td><td class="${w} ${MONO}">${r[2]}</td><td class="${w}">${r[3]}</td>
          ${base}<td class="${y}">${r[5]}</td><td class="${w} ${MONO} text-right">${r[6]}</td>
          <td class="${y} ${MONO} text-right">${r[7]}</td><td class="${y} ${MONO} text-right">${r[8]}</td>
          <td class="${w}">${r[9]}</td><td class="${on ? 'p-0 border-r border-b border-[#808080] bg-[#b3d5ff] shadow-[0_-1px_#808080,inset_0_1px_#808080,inset_-1px_-1px_#808080]' : w}"></td></tr>`;
      }).join('') + '</tbody>';
  </script>
</body>
</html>
